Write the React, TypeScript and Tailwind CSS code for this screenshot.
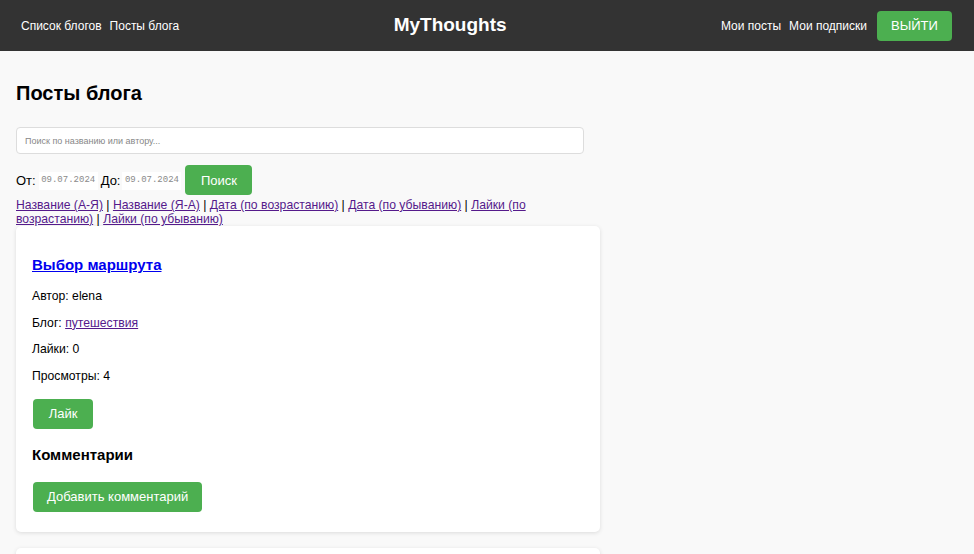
import { useState } from 'react';

interface Post {
  id: number;
  title: string;
  author: string;
  blog: string;
  likes: number;
  views: number;
}

const posts: Post[] = [
  { id: 1, title: 'Выбор маршрута', author: 'elena', blog: 'путешествия', likes: 0, views: 4 },
  { id: 2, title: 'Сборы в дорогу', author: 'elena', blog: 'путешествия', likes: 2, views: 9 },
];

const sortLinks = [
  'Название (А-Я)',
  'Название (Я-А)',
  'Дата (по возрастанию)',
  'Дата (по убыванию)',
  'Лайки (по возрастанию)',
  'Лайки (по убыванию)',
];

function GreenButton({ children, className = '' }: { children: React.ReactNode; className?: string }) {
  return (
    <button
      type="button"
      className={`bg-[#4caf50] text-white text-[13px] leading-none h-[30px] rounded-[4px] cursor-pointer hover:bg-[#45a049] ${className}`}
    >
      {children}
    </button>
  );
}

function PostCard({ post }: { post: Post }) {
  return (
    <div className="bg-white rounded-[5px] shadow-[0_1px_4px_rgba(0,0,0,0.12)] px-4 pt-[15px] pb-[16px] mb-4">
      <h3 className="text-[15px] leading-[17px] font-bold mt-[15px] mb-[16px]">
        <a href="#" className="text-[#0000ee] underline">
          {post.title}
        </a>
      </h3>
      <p className="text-[12.2px] leading-[14px] my-[12.6px]">Автор: {post.author}</p>
      <p className="text-[12.2px] leading-[14px] my-[12.6px]">
        Блог:{' '}
        <a href="#" className="text-[#551a8b] underline">
          {post.blog}
        </a>
      </p>
      <p className="text-[12.2px] leading-[14px] my-[12.6px]">Лайки: {post.likes}</p>
      <p className="text-[12.2px] leading-[14px] mt-[12.6px] mb-0">Просмотры: {post.views}</p>
      <div className="pt-[16px] pl-px">
        <GreenButton className="w-[60px]">Лайк</GreenButton>
      </div>
      <h3 className="text-[15px] leading-[17px] font-bold mt-[17px] mb-[19px]">Комментарии</h3>
      <div className="pl-px pb-[4px]">
        <GreenButton className="px-[14px]">Добавить комментарий</GreenButton>
      </div>
    </div>
  );
}

export default function App() {
  const [query, setQuery] = useState('');

  return (
    <div className="min-h-[554px] bg-[#f9f9f9] text-black font-['Liberation_Sans',Arial,sans-serif]">
      <header className="h-[51px] bg-[#333333] flex items-center justify-between pl-[21px] pr-[22px]">
        <nav className="flex items-center gap-2 text-[12px] text-white">
          <a href="#">Список блогов</a>
          <a href="#">Посты блога</a>
        </nav>
        <div className="text-white text-[19px] font-bold">MyThoughts</div>
        <nav className="flex items-center gap-2 text-[12px] text-white">
          <a href="#">Мои посты</a>
          <a href="#">Мои подписки</a>
          <GreenButton className="w-[75px] ml-[2px] text-[13px]">ВЫЙТИ</GreenButton>
        </nav>
      </header>

      <main className="px-4 w-[616px]">
        <h2 className="text-[20px] leading-[23px] font-bold mt-[31px] mb-[22px]">Посты блога</h2>

        <input
          type="text"
          value={query}
          onChange={(e) => setQuery(e.target.value)}
          placeholder="Поиск по названию или автору..."
          className="block w-[568px] h-[27px] bg-white border border-[#dddddd] rounded-[4px] px-2 text-[9px] placeholder:text-[#888888] outline-none"
        />

        <div className="flex items-end mt-[11px] text-[13px]">
          <span className="leading-[18px] mb-[5px]">От:</span>
          <span className="ml-[3px] mb-[5px] w-[59px] h-[18px] bg-white flex items-center justify-center font-['Liberation_Mono',monospace] text-[9px] text-[#8a8a8a]">
            09.07.2024
          </span>
          <span className="ml-[3px] leading-[18px] mb-[5px]">До:</span>
          <span className="ml-[2px] mb-[5px] w-[59px] h-[18px] bg-white flex items-center justify-center font-['Liberation_Mono',monospace] text-[9px] text-[#8a8a8a]">
            09.07.2024
          </span>
          <GreenButton className="ml-[4px] w-[67px]">Поиск</GreenButton>
        </div>

        <div className="text-[12.2px] leading-[14px] mt-[3px]">
          {sortLinks.map((label, i) => (
            <span key={label}>
              <a href="#" className="text-[#551a8b] underline">
                {label}
              </a>
              {i < sortLinks.length - 1 && ' | '}
            </span>
          ))}
        </div>

        <div>
          {posts.map((p) => (
            <PostCard key={p.id} post={p} />
          ))}
        </div>
      </main>
    </div>
  );
}
